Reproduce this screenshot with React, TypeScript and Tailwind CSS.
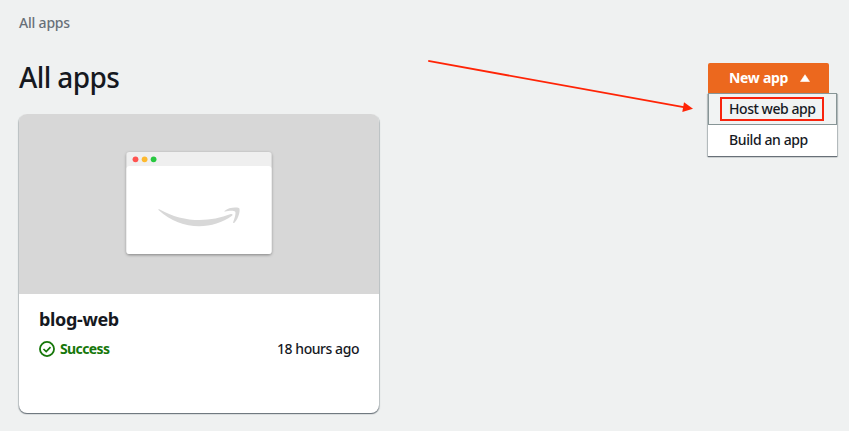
function BrowserPreview() {
  return (
    <svg className="block h-[108px] w-[152px]" viewBox="0 0 152 108" style={{ overflow: 'visible' }}>
      <defs>
        <filter id="shade" x="-10%" y="-10%" width="120%" height="125%">
          <feDropShadow dx="0" dy="1" stdDeviation="1.5" floodColor="#000" floodOpacity="0.4" />
        </filter>
      </defs>
      <rect x="3.5" y="3" width="145" height="102" rx="3" fill="#efefef" filter="url(#shade)" />
      <path d="M3.5 20q0-3 3-3H145.500q3 0 3 3v82q0 3-3 3H6.500q-3 0-3-3z" fill="#fff" />
      <circle cx="12.500" cy="10.300" r="2.900" fill="#ff5350" />
      <circle cx="21.600" cy="10.300" r="2.900" fill="#fdb92f" />
      <circle cx="30.600" cy="10.300" r="2.900" fill="#28c840" />
      <path d="M35.800 61.200c-.8-.5-.5-1.400.5-.9 23 13.200 49 13.700 71.500 4.800 1.500-.6 2.400.7 1.200 1.600-20.500 15-52 14.400-73.200-5.500z" fill="#d8d8d8" />
      <path d="M101.500 62c3.500-3.300 10.500-4 14.400-3 1.700.5.500 10-4.500 14.700-.8.700-1.600.3-1.200-.6 1.200-3.100 3.100-9.200 1.900-10.600-1.200-1.300-6.700-.9-9.900-.1-1 .2-1.200 0-.7-.4z" fill="#d8d8d8" />
    </svg>
  );
}

function AppCard() {
  return (
    <article className="h-[299px] w-[360px] overflow-hidden rounded-lg bg-white shadow-[0_1px_1px_0_#687078,1px_1px_1px_0_#c3c9ca,-1px_1px_1px_0_#c3c9ca]">
      <div className="flex h-[180px] items-start justify-center bg-[#d7d7d7] pt-[35px]">
        <BrowserPreview />
      </div>
      <div className="px-5 pt-[13px]">
        <h2 className="text-[18px] leading-6 font-bold tracking-[-0.35px]">blog-web</h2>
        <div className="mt-2 flex h-5 items-center justify-between">
          <div className="flex items-center text-[#16770a]">
            <svg className="size-4" viewBox="0 0 16 16" fill="none" stroke="currentColor">
              <circle cx="8" cy="8" r="7.050" strokeWidth="1.800" />
              <path d="M4.500 8l2.700 2.500 4.300-4.300" strokeWidth="1.700" />
            </svg>
            <span className="ml-[5px] text-[14px] leading-5 font-bold tracking-[-0.6px]">Success</span>
          </div>
          <span className="text-[14px] leading-5 font-medium tracking-[-0.45px]">18 hours ago</span>
        </div>
      </div>
    </article>
  );
}

function NewAppMenu() {
  return (
    <div className="mt-[17px] w-[130px]">
      <button className="flex h-[30px] w-[121px] items-center rounded-t-[2px] bg-[#ec681e] pl-[21px] text-[14px] font-bold tracking-[-0.3px] text-white">
        <span className="w-[60px] pb-[2px] text-left whitespace-nowrap">New app</span>
        <svg className="ml-[11px] h-[8px] w-[10px]" viewBox="0 0 10 8">
          <path d="M5 .7L9.500 7.500H.5z" fill="white" stroke="white" strokeWidth=".6" strokeLinejoin="round" />
        </svg>
      </button>
      <ul className="h-[63px] w-[129px] bg-white text-[14px] leading-5 font-medium shadow-[0_1px_1px_0_#687078,1px_1px_1px_0_#c3c9ca,-1px_1px_1px_0_#c3c9ca]">
        <li className="flex h-8 items-center border border-[#879596] bg-[#f1f3f3] pl-[11px]">
          <span className="flex h-6 w-[104px] items-center border-2 border-[#f8240d] pl-[7px] tracking-[-0.45px] whitespace-nowrap">
            Host web app
          </span>
        </li>
        <li className="flex h-[31px] items-center pb-[2px] pl-[21px] tracking-[-0.4px]">Build an app</li>
      </ul>
    </div>
  );
}

export default function App() {
  return (
    <main className="relative h-[431px] w-[849px] overflow-hidden bg-[#eff1f1] pt-[13px] pr-[11px] pl-[19px] font-['Noto_Sans',sans-serif] text-[#16191f]">
      <nav className="text-[14px] leading-5 font-medium tracking-[-0.2px] text-[#687078]">All apps</nav>
      <header className="flex h-[81px] items-start justify-between pt-[13px]">
        <h1 className="mt-[13px] text-[28px] leading-9 font-medium tracking-[-0.6px]">All apps</h1>
        <NewAppMenu />
      </header>
      <AppCard />
      <svg className="pointer-events-none absolute top-0 left-0 h-[160px] w-[849px]" viewBox="0 0 849 160">
        <path d="M428.200 60.900L685 107.400" stroke="#ff2406" strokeWidth="1.800" />
        <path d="M684 102.300L693 108.800L682.300 112z" fill="#ff2406" />
      </svg>
    </main>
  );
}
